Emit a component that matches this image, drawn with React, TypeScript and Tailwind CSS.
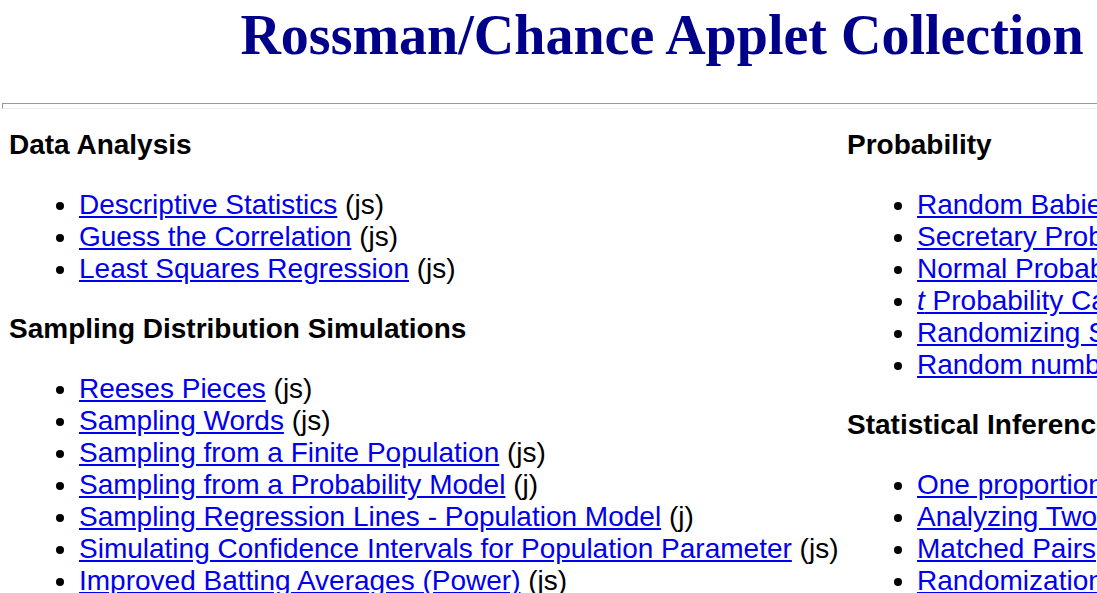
import React from "react";

type Item = { label: React.ReactNode; tag: string };

const dataAnalysis: Item[] = [
  { label: "Descriptive Statistics", tag: "js" },
  { label: "Guess the Correlation", tag: "js" },
  { label: "Least Squares Regression", tag: "js" },
];

const sampling: Item[] = [
  { label: "Reeses Pieces", tag: "js" },
  { label: "Sampling Words", tag: "js" },
  { label: "Sampling from a Finite Population", tag: "js" },
  { label: "Sampling from a Probability Model", tag: "j" },
  { label: "Sampling Regression Lines - Population Model", tag: "j" },
  { label: "Simulating Confidence Intervals for Population Parameter", tag: "js" },
  { label: "Improved Batting Averages (Power)", tag: "js" },
];

const probability: Item[] = [
  { label: "Random Babies", tag: "js" },
  { label: "Secretary Problem", tag: "js" },
  { label: "Normal Probability Calculator", tag: "js" },
  {
    label: (
      <>
        <i>t</i> Probability Calculator
      </>
    ),
    tag: "js",
  },
  { label: "Randomizing Subjects", tag: "js" },
  { label: "Random number generator", tag: "js" },
];

const inference: Item[] = [
  { label: "One proportion inference", tag: "js" },
  { label: "Analyzing Two-way Tables", tag: "js" },
  { label: "Matched Pairs", tag: "js" },
  { label: "Randomization tests", tag: "js" },
];

function Section({ title, items, first }: { title: string; items: Item[]; first?: boolean }) {
  return (
    <div className={first ? "" : "mt-[28px]"}>
      <div className="font-bold leading-[32px] whitespace-nowrap">{title}</div>
      <ul className="list-disc pl-[70px] mt-[28px]">
        {items.map((it, i) => (
          <li key={i} className="leading-[32px] whitespace-nowrap">
            <a href="#" className="text-[#0000ee] underline">
              {it.label}
            </a>{" "}
            ({it.tag})
          </li>
        ))}
      </ul>
    </div>
  );
}

export default function App() {
  return (
    <div
      className="w-[1097px] h-[593px] overflow-hidden bg-white text-black"
      style={{ fontFamily: '"Liberation Sans", Arial, sans-serif' }}
    >
      <div className="w-[1320px] ml-[2px]">
        <h1
          className="text-center font-bold text-[56px] leading-[64px] text-[#00008b] pt-[3px]"
          style={{ fontFamily: '"Liberation Serif", "Times New Roman", serif' }}
        >
          Rossman/Chance Applet Collection
        </h1>
        <div className="mt-[36px] h-[6px] border-t border-l border-t-[#999999] border-l-[#999999] border-b border-r border-b-[#eeeeee] border-r-[#eeeeee]" />
        <div className="flex mt-[20px] pl-[7px] text-[28px]">
          <div className="w-[838px] shrink-0">
            <Section title="Data Analysis" items={dataAnalysis} first />
            <Section title="Sampling Distribution Simulations" items={sampling} />
          </div>
          <div className="flex-1">
            <Section title="Probability" items={probability} first />
            <Section title="Statistical Inference" items={inference} />
          </div>
        </div>
      </div>
    </div>
  );
}
